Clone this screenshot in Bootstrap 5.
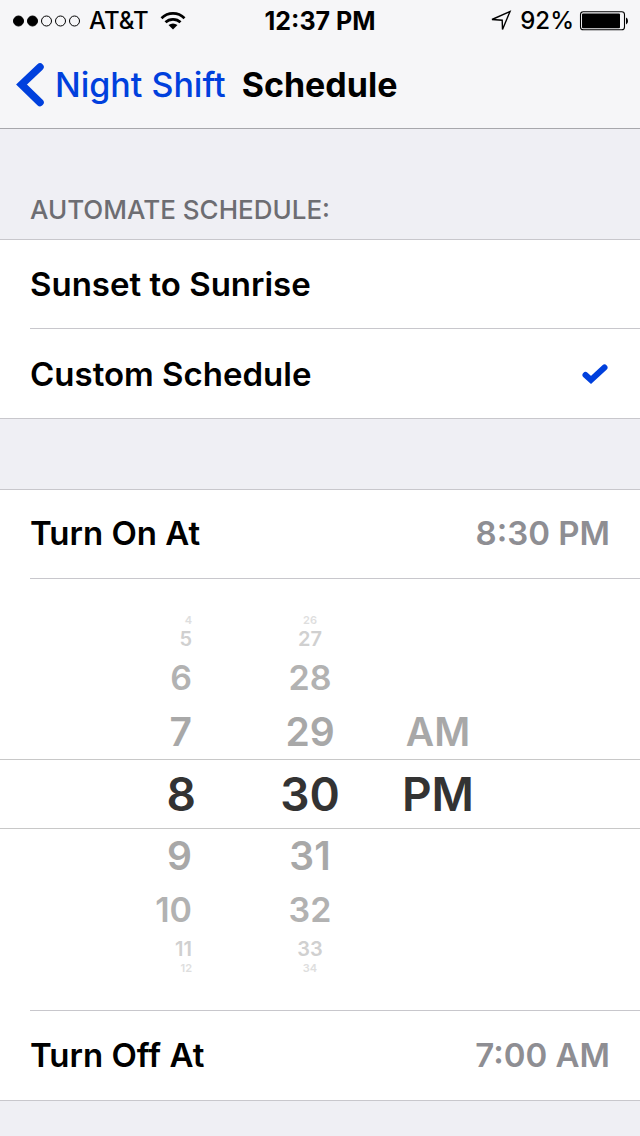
<!DOCTYPE html>
<html lang="en">
<head>
<meta charset="utf-8">
<meta name="viewport" content="width=device-width, initial-scale=1">
<title>Schedule</title>
<link href="https://cdn.jsdelivr.net/npm/bootstrap@5.3.0/dist/css/bootstrap.min.css" rel="stylesheet">
<style>
  :root { --line: #c8c7cc; --tint: #0040dd; }
  body { background: #efeff4; color: #000; font-family: Inter, "Liberation Sans", sans-serif; font-weight: 500; }
  .top-area { background: #f6f6f8; border-bottom: 1px solid #a7a7ac; }
  .status-bar { height: 42px; padding: 0 12px; font-size: 24px; line-height: 42px; }
  .status-side { flex: 1 1 0; }
  .clock { font-weight: 700; font-size: 25px; }
  .title-bar { height: 86px; padding: 0 16px; font-size: 34px; line-height: 86px; }
  .back-link { color: var(--tint); text-decoration: none; gap: 10px; }
  .title-bar h1 { font-size: 34px; line-height: 86px; font-weight: 700; margin: 0 0 0 16px; }
  .group-title { height: 110px; padding: 0 30px 8px; font-size: 26px; line-height: 42px; color: #6d6d72; margin: 0; font-weight: 500; }
  .group-box { background: #fff; border-top: 1px solid var(--line); border-bottom: 1px solid var(--line); }
  .inset-row { margin-left: 30px; padding: 0 30px 0 0; height: 88px; font-size: 33px; line-height: 86px; font-weight: 600; }
  .inset-row + .inset-row, .picker + .inset-row { border-top: 1px solid var(--line); height: 90px; line-height: 88px; }
  button.inset-row { width: calc(100% - 30px); background: none; border: 0; color: #000; text-align: left; }
  .row-value { color: #8e8e93; }
  .tick { visibility: hidden; }
  input:checked ~ .tick { visibility: visible; }
  .group-gap { margin-top: 70px; }
  .picker-line { margin-left: 30px; border-top: 1px solid var(--line); }
  .picker { display: grid; grid-template-columns: 123fr 64fr 64fr 69fr; padding: 34px 0 35px; position: relative; }
  .picker ul { list-style: none; margin: 0; padding: 0; text-align: center; color: #a8a8a8; }
  .picker .hours { text-align: right; padding-right: 54px; }
  .picker .hours .chosen { margin-right: -4px; }
  .picker li { height: 54px; line-height: 54px; font-size: 39px; font-weight: 600; }
  .picker li.mid { font-size: 34px; color: #b2b2b2; }
  .picker li.far { height: 24px; line-height: 24px; font-size: 20px; color: #d0d0d0; }
  .picker li.edge { height: 14px; line-height: 14px; font-size: 11px; color: #dedede; }
  .picker li.chosen { height: 70px; line-height: 70px; font-size: 46px; color: #333; }
  .picker .halves { padding-top: 92px; }
  .band { position: absolute; left: 0; right: 0; top: 180px; height: 70px; border: solid #c8c8c8; border-width: 1px 0; pointer-events: none; }
</style>
</head>
<body>
<header class="top-area">
  <div class="status-bar d-flex align-items-center">
    <div class="status-side d-flex align-items-center">
      <svg width="69" height="14" viewBox="0 0 69 14" aria-hidden="true"><g stroke="#000"><circle cx="6.5" cy="7" r="5"/><circle cx="20.5" cy="7" r="5"/><g fill="none"><circle cx="34.5" cy="7" r="5"/><circle cx="48.5" cy="7" r="5"/><circle cx="62.5" cy="7" r="5"/></g></g></svg>
      <span class="ms-2">AT&amp;T</span>
      <svg class="ms-2" width="34" height="20" viewBox="0 0 34 20" aria-hidden="true"><g fill="none" stroke="#000" stroke-width="2.700"><path d="M4.500 7.200C11 .8 21 .8 27.500 7.200"/><path d="M8.500 11.300C12.500 7.300 19.500 7.300 23.500 11.300"/></g><path d="M16 18.500L11.500 14Q16 10.800 20.500 14Z"/></svg>
    </div>
    <span class="clock">12:37 PM</span>
    <div class="status-side d-flex align-items-center justify-content-end">
      <svg width="22" height="22" viewBox="0 0 22 22" aria-hidden="true"><path d="M2 9.500L20 1.500L12.500 19.500L12.200 10.200Z" fill="none" stroke="#000" stroke-width="1.400"/></svg>
      <span class="ms-2 me-1">92%</span>
      <svg class="flex-shrink-0" width="50" height="20" viewBox="0 0 50 20" aria-hidden="true"><rect x="2.500" y=".8" width="44" height="18" rx="2.800" fill="none" stroke="#000" stroke-width="1.100"/><rect x="4" y="2.500" width="38" height="14.700" rx="1"/><path d="M48 6.500Q50 7 50 10Q50 13 48 13.500Z"/></svg>
    </div>
  </div>
  <nav class="title-bar d-flex align-items-center">
    <a class="back-link d-flex align-items-center" href="#">
      <svg width="29" height="44" viewBox="0 0 29 44" aria-hidden="true"><path d="M24 4L5.500 21.500L24 39.500" fill="none" stroke="currentColor" stroke-width="7.500" stroke-linecap="round"/></svg>
      <span>Night Shift</span>
    </a>
    <h1>Schedule</h1>
  </nav>
</header>
<main>
  <h2 class="group-title d-flex align-items-end">AUTOMATE SCHEDULE:</h2>
  <div class="group-box">
    <label class="inset-row d-flex align-items-center justify-content-between">
      <span>Sunset to Sunrise</span>
      <input class="visually-hidden" type="radio" name="schedule">
      <svg class="tick" width="30" height="24" viewBox="0 0 30 24" aria-hidden="true"><path d="M5.500 13L11 18L24.500 5.500" fill="none" stroke="#0040dd" stroke-width="6" stroke-linecap="round"/></svg>
    </label>
    <label class="inset-row d-flex align-items-center justify-content-between">
      <span>Custom Schedule</span>
      <input class="visually-hidden" type="radio" name="schedule" checked>
      <svg class="tick" width="30" height="24" viewBox="0 0 30 24" aria-hidden="true"><path d="M5.500 13L11 18L24.500 5.500" fill="none" stroke="#0040dd" stroke-width="6" stroke-linecap="round"/></svg>
    </label>
  </div>
  <div class="group-box group-gap">
    <button type="button" class="inset-row d-flex justify-content-between"><span>Turn On At</span><span class="row-value">8:30 PM</span></button>
    <div class="picker-line"></div>
    <div class="picker">
      <ul class="hours" role="listbox" aria-label="Hour">
        <li class="edge" role="option">4</li><li class="far" role="option">5</li><li class="mid" role="option">6</li><li role="option">7</li>
        <li class="chosen" role="option" aria-selected="true">8</li>
        <li role="option">9</li><li class="mid" role="option">10</li><li class="far" role="option">11</li><li class="edge" role="option">12</li>
      </ul>
      <ul role="listbox" aria-label="Minute">
        <li class="edge" role="option">26</li><li class="far" role="option">27</li><li class="mid" role="option">28</li><li role="option">29</li>
        <li class="chosen" role="option" aria-selected="true">30</li>
        <li role="option">31</li><li class="mid" role="option">32</li><li class="far" role="option">33</li><li class="edge" role="option">34</li>
      </ul>
      <ul class="halves" role="listbox" aria-label="AM or PM">
        <li role="option">AM</li>
        <li class="chosen" role="option" aria-selected="true">PM</li>
      </ul>
      <div class="band"></div>
    </div>
    <button type="button" class="inset-row d-flex justify-content-between"><span>Turn Off At</span><span class="row-value">7:00 AM</span></button>
  </div>
</main>
<script src="https://cdn.jsdelivr.net/npm/bootstrap@5.3.0/dist/js/bootstrap.bundle.min.js"></script>
</body>
</html>
